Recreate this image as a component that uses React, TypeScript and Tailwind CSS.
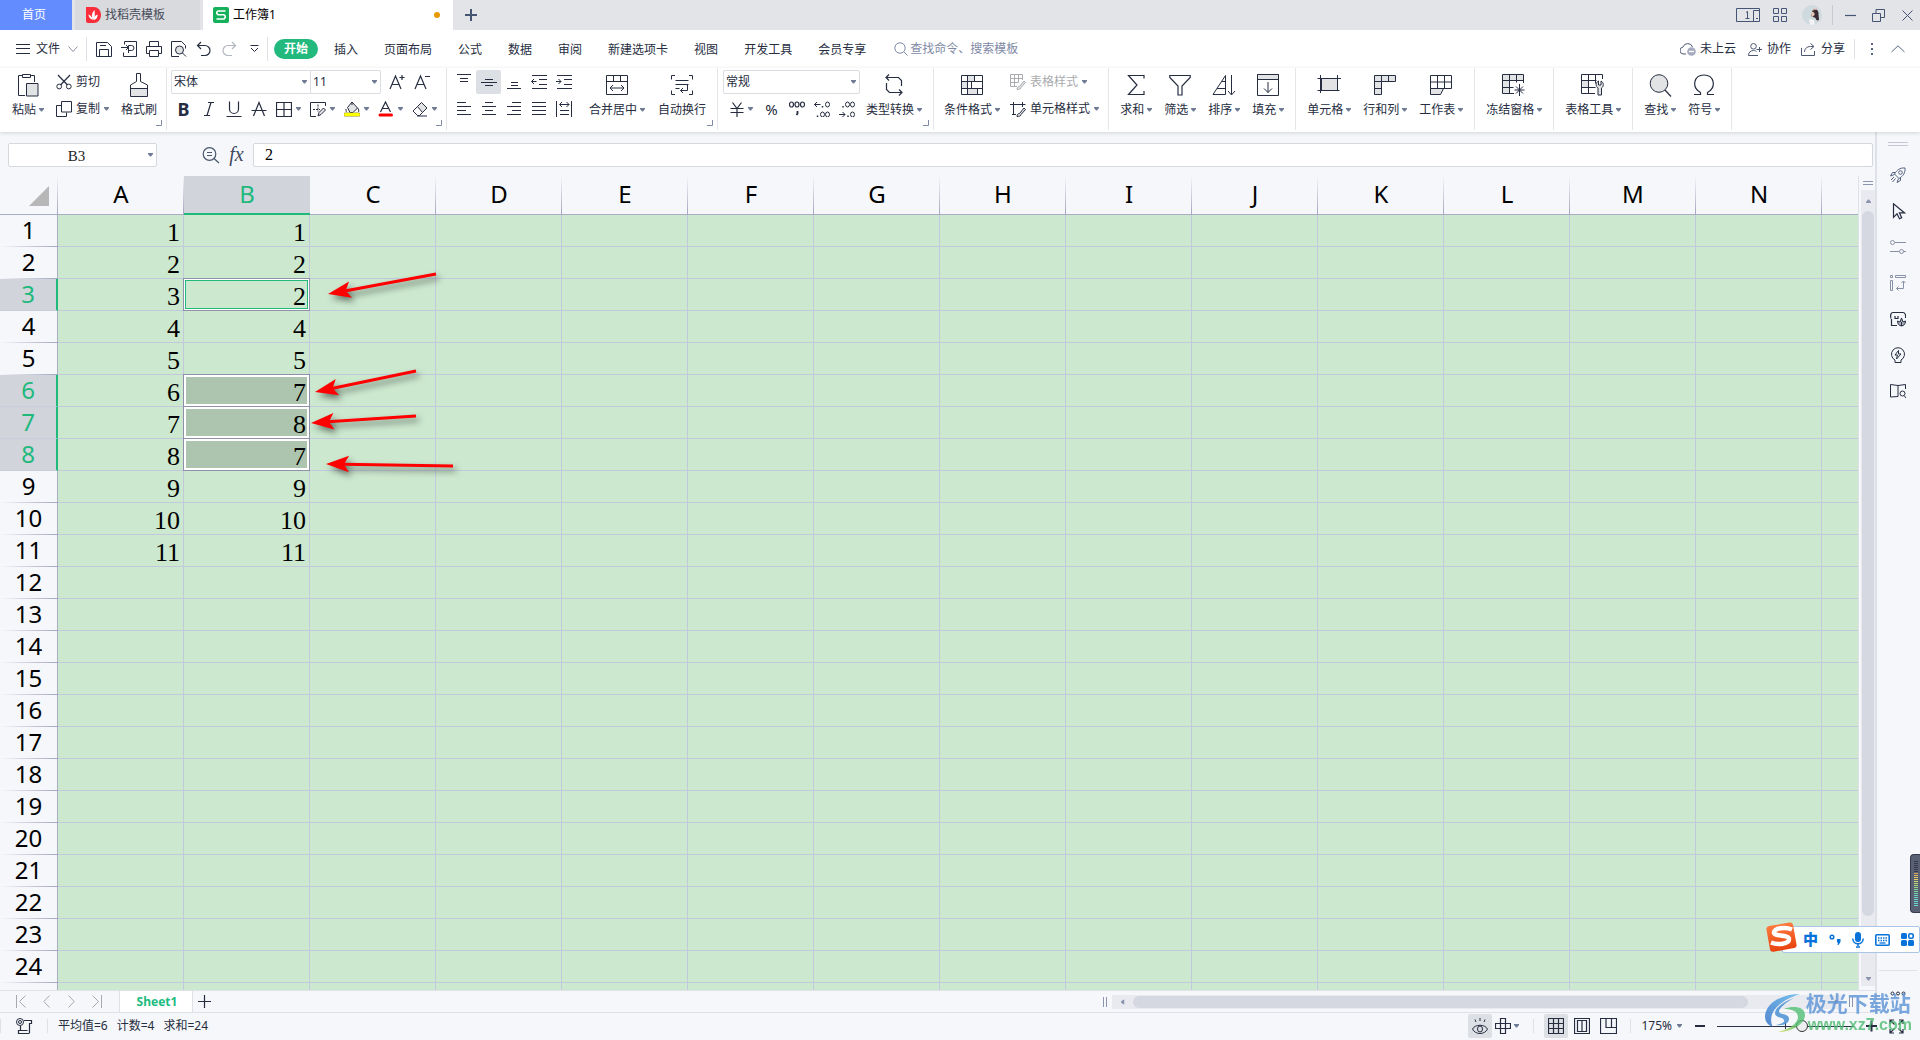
import React from "react";

type IconProps = { w?: number; h?: number; className?: string; children: React.ReactNode };

function Icon({ w = 16, h = 16, className = "", children }: IconProps) {
  return (
    <svg
      width={w}
      height={h}
      viewBox={`0 0 ${w} ${h}`}
      fill="none"
      stroke="currentColor"
      strokeWidth="1"
      className={`shrink-0 ${className}`}
      aria-hidden="true"
    >
      {children}
    </svg>
  );
}

const Stroke = ({ d, w, h, className, sw }: { d: string; w?: number; h?: number; className?: string; sw?: number }) => (
  <Icon w={w} h={h} className={className}>
    <path d={d} strokeWidth={sw ?? 1.2} />
  </Icon>
);

function Caret({ className = "text-[#6f7a94]" }: { className?: string }) {
  return (
    <svg width="5" height="4" viewBox="0 0 5 4" className={`shrink-0 ${className}`} aria-hidden="true">
      <path d="M0 0h5v1L3 3.500H2L0 1z" fill="currentColor" />
    </svg>
  );
}

function Corner() {
  return (
    <svg width="6" height="6" viewBox="0 0 6 6" className="absolute right-1 bottom-1 text-[#7f8aa6]" aria-hidden="true">
      <path d="M5.500 0v5.500H0" fill="none" stroke="currentColor" />
    </svg>
  );
}

/* ---------- ribbon icons ---------- */
const G = "#e2e3e5";

const PasteIcon = () => (
  <Icon w={22} h={24}>
    <path d="M8 22.500H1.500v-20H6M13 2.500h4.500V9M5.500 1.500h8v3h-8z" />
    <path d="M9.500 10.500h11.500v12.500H9.500z" fill={G} />
  </Icon>
);
const CutIcon = () => (
  <Icon>
    <path d="M2 1l9.500 10M14 1L4.500 11" strokeWidth="1.2" />
    <circle cx="3.2" cy="12.5" r="2.4" />
    <circle cx="12.8" cy="12.5" r="2.4" />
  </Icon>
);
const CopyIcon = () => (
  <Icon>
    <path d="M5.500 0.500h10v10.500h-10zM5 4.500H0.500v11H10.500v-4" />
  </Icon>
);
const BrushIcon = () => (
  <Icon w={20} h={24}>
    <path d="M1.500 15.500h17v8h-17z" fill={G} stroke="none" />
    <path d="M7.500 8.500v-8h4v8l7 3.500v11.500h-17V12zM1.500 15.500h17" />
  </Icon>
);
const FontUp = ({ up }: { up: boolean }) => (
  <Icon w={17} h={16}>
    <path d={up ? "M1 15L6.500 2L12 15M3 10.500h7M10.500 3.500h5M13 1v5" : "M1 15L6.500 2L12 15M3 10.500h7M11 2.500h5"} strokeWidth="1.2" />
  </Icon>
);
const BorderIcon = () => <Stroke d="M0.500 1.500h15v14h-15zM8 1.500v14M0.500 8.500h15" />;
const DrawBorderIcon = () => (
  <Icon>
    <path d="M6 15.500H0.500v-14h15V5" />
    <path d="M3 8.500h7M8 3.500v7" strokeDasharray="2 1" />
    <path d="M8 15l1-3.500 4.500-4.500 2 2L11 13.500z" fill={G} />
  </Icon>
);
const FillIcon = () => (
  <Icon>
    <path d="M3.500 6.500L8 1l5.500 6-4.500 4.500H6z" fill={G} />
    <path d="M2 8c0 2 .5 3 0 3M13.500 7c1.500 1 1.500 3 1 4M8 1v3" />
    <path d="M1.500 13.500h13" stroke="#8a8a40" strokeWidth="4" strokeLinecap="round" />
    <path d="M1.500 13.500h13" stroke="#ffff00" strokeWidth="3" strokeLinecap="round" />
  </Icon>
);
const FontColorIcon = () => (
  <Icon>
    <path d="M2.500 11L7.500 1l5 10M4.500 7.500h6" strokeWidth="1.2" />
    <path d="M2 14h11.500" stroke="#ff0000" strokeWidth="3" strokeLinecap="round" />
  </Icon>
);
const EraserIcon = () => (
  <Icon>
    <path d="M5.500 5.500L9.500 1.500l5.500 5.500-4.500 4.500z" fill={G} />
    <path d="M5.500 5.500L1 10l4.500 4.500h2l3-3M5 15h10" />
  </Icon>
);
const MergeIcon = () => (
  <Icon w={22} h={22}>
    <path d="M0.500 1.500h21v19h-21zM0.500 7.500h21M7.500 1.500v6M14.500 1.500v6M4 14h14M7 11l-3 3 3 3M15 11l3 3-3 3" />
  </Icon>
);
const WrapIcon = () => (
  <Icon w={22} h={22}>
    <path d="M4 1.500H.5v4M18 1.500h3.500v4M4 20.500H.5v-4M18 20.500h3.500v-4M4.500 6.500h13M4.500 10.500h13M4.500 14.500h4M16.500 10.500v6h-7M12 14l-2.500 2.500L12 19" />
  </Icon>
);
const ConvertIcon = () => (
  <Icon w={20} h={22}>
    <path d="M5 .5l-3 3 3 3M2 3.500h12.500l3 3V12M15 21.500l3-3-3-3M18 18.500H5.500l-3-3V9" strokeWidth="1.2" />
  </Icon>
);
const CondIcon = () => (
  <Icon w={22} h={22}>
    <path d="M6.500 1.500h7v6h-7zM6.500 14.500h10v6h-10zM.5 7.500h6v7h-6z" fill={G} stroke="none" />
    <path d="M.5 1.500h21v19H.5zM.5 7.500h21M.5 14.500h21M6.500 1.500v19M13.500 1.500v6M10.500 7.500v7M16.500 14.500v6" />
  </Icon>
);
const TableStyleIcon = () => (
  <Icon>
    <path d="M7 12.500H.5v-12h12V6M.5 4.500h12M.5 8.500h8M4.500 .5v12M8.500 .5v8" />
    <path d="M7 15.500c0-2 1-3 2.500-3L14 7l1.500 1.500-4.500 5c0 1.500-2 2-4 2z" fill={G} />
  </Icon>
);
const CellStyleIcon = () => (
  <Icon>
    <path d="M0 3.500h15.500M3.500 1v13M12.500 1v5M2 13.500h4" />
    <path d="M7 15.500c0-2 1-3 2.500-3L14 7l1.500 1.500-4.500 5c0 1.500-2 2-4 2z" fill={G} />
  </Icon>
);
const SumIcon = () => <Stroke w={18} h={22} d="M17 4.500V1.500H1.500L10 11L1.500 20.500H17V17" />;
const FilterIcon = () => <Stroke w={22} h={22} d="M.8 1.500h20.400v2L13 12v9H9v-9L.8 3.500z" />;
const SortIcon = () => (
  <Icon w={24} h={22}>
    <path d="M13.500 1.500v19H1zM13.500 7.500H9.500M13.500 14.500H5M19.500 1v19.500M16 17l3.500 4 3.500-4" />
  </Icon>
);
const FillDownIcon = () => (
  <Icon w={22} h={22}>
    <path d="M.5 .5h21v5H.5z" fill={G} />
    <path d="M.5 .5h21v21H.5zM11 8v10.500M7 14.500l4 4 4-4" />
  </Icon>
);
const CellIcon = () => (
  <Icon w={24} h={22}>
    <path d="M4.500 4.500h16v12h-16z" fill={G} />
    <path d="M.5 4.500h23.500M3.500 1v18M20.500 1v13M.5 16.500h17M19.500 16.500h3" />
  </Icon>
);
const RowColIcon = () => (
  <Icon w={22} h={22}>
    <path d="M.5 1.500h21v6H7.500v13h-7z" fill={G} stroke="none" />
    <path d="M.5 1.500h21v6H7.500v13h-7zM.5 7.500h7v-6M14.500 1.500v6M.5 14.500h7" />
  </Icon>
);
const SheetIcon = () => (
  <Icon w={22} h={22}>
    <path d="M.5 14.500h13l-3 6H.5z" fill={G} />
    <path d="M.5 1.500h21v13H.5zM.5 8h21M7.500 1.500v13M14.500 1.500v13" />
  </Icon>
);
const FreezeIcon = () => (
  <Icon w={24} h={22}>
    <path d="M.5 .5h21v6H7.500v13h-7z" fill={G} stroke="none" />
    <path d="M12 19.500H.5V.5h21V9M.5 6.500h21M.5 13.500h11M7.500 .5v19M14.500 .5v8M17.500 10v12M12.500 16h10M14 12.500l7 7M21 12.500l-7 7" />
  </Icon>
);
const ToolIcon = () => (
  <Icon w={24} h={22}>
    <path d="M.5 7h7v6H.5z" fill={G} stroke="none" />
    <path d="M14 19.500H.5V.5h21V5M.5 6.500h15M.5 13.500h14M7.500 .5v19M14.500 .5v9" />
    <path d="M17.500 7c-3 1.500-3 5.500-.5 7v7h3.500v-7c2.500-1.500 2.500-5.500-.5-7v4h-2.500z" fill={G} />
  </Icon>
);
const FindIcon = () => (
  <Icon w={23} h={23}>
    <circle cx="10" cy="9.500" r="8.800" fill={G} />
    <path d="M16 16l6 6.500" strokeWidth="1.2" />
  </Icon>
);
const OmegaIcon = () => (
  <Stroke w={22} h={22} d="M1 20.500h6.500v-2C-2 13 1 1 11 1s13 12 3.500 17.500v2H21" />
);

/* ---------- small building blocks ---------- */
function Big({ icon, label, caret = true }: { icon: React.ReactNode; label: string; caret?: boolean }) {
  return (
    <button type="button" className="flex shrink-0 flex-col items-center">
      <span className="flex h-[30px] items-center justify-center pt-1">{icon}</span>
      <span className="flex h-6 items-center gap-[3px] whitespace-nowrap">
        {label}
        {caret && <Caret />}
      </span>
    </button>
  );
}

function Small({ icon, label, caret = true, className = "" }: { icon: React.ReactNode; label: string; caret?: boolean; className?: string }) {
  return (
    <button type="button" className={`flex h-[27px] items-center gap-1 whitespace-nowrap ${className}`}>
      {icon}
      {label}
      {caret && <Caret />}
    </button>
  );
}

function Group({ children, corner, className = "gap-3 px-[11px]" }: { children: React.ReactNode; corner?: boolean; className?: string }) {
  return (
    <div className={`relative flex h-[62px] shrink-0 border-r border-[#e4e6ea] ${className}`}>
      {children}
      {corner && <Corner />}
    </div>
  );
}

function Cell({ children, label, className = "w-[25px]" }: { children: React.ReactNode; label: string; className?: string }) {
  return (
    <button type="button" aria-label={label} className={`flex h-6 shrink-0 items-center justify-center gap-1 ${className}`}>
      {children}
    </button>
  );
}

function Combo({ label, options, className }: { label: string; options: string[]; className: string }) {
  return (
    <div className={`relative flex h-6 items-center border border-[#d9dce1] bg-white ${className}`}>
      <select aria-label={label} className="h-full w-full appearance-none bg-transparent pl-[2px] outline-none">
        {options.map((o) => (
          <option key={o}>{o}</option>
        ))}
      </select>
      <Caret className="pointer-events-none absolute right-[3px] text-[#6f7a94]" />
    </div>
  );
}

const lines = (rows: number[][]) => rows.map(([a, b, y]) => `M${a} ${y}.5H${b}`).join("");
const L = ({ rows, extra = "" }: { rows: number[][]; extra?: string }) => <Stroke sw={1} d={lines(rows) + extra} />;

const menu = ["插入", "页面布局", "公式", "数据", "审阅", "新建选项卡", "视图", "开发工具", "会员专享"];

function TitleBar() {
  return (
    <header className="flex h-[30px] shrink-0 bg-[#e2e4e8]">
      <button type="button" className="w-[72px] bg-[#638dff] pr-1 text-white">首页</button>
      <button type="button" className="ml-[3px] flex w-[125px] items-center gap-1 bg-[#d9dade] pl-[11px] text-[#464b59]">
        <svg width="15" height="16" viewBox="0 0 15 16" aria-hidden="true">
          <path d="M0 0h8a7 8 0 010 16H2a2 2 0 01-2-2z" fill="#fb2d3a" />
          <path d="M7.500 13C5 10 5.500 6 8.500 3c.5 4 .5 7-1 10zM7 13C4 12 2.500 10 2.500 7.500 4.500 8.500 6 10 7 13zM8 13c0-3 1-4.500 3.500-5.500C12 10 10.500 12.500 8 13z" fill="#fff" />
        </svg>
        找稻壳模板
      </button>
      <div className="ml-[3px] flex w-[250px] items-center bg-white pr-[13px] pl-[10px] text-black">
        <svg width="16" height="16" viewBox="0 0 16 16" aria-hidden="true">
          <rect width="16" height="16" rx="2" fill="#14b05a" />
          <path d="M12.500 4H5L3.800 5.200v1.300L5 7.800h6l1.200 1.200v1.500L11 12H3.500" fill="none" stroke="#fff" strokeWidth="1.600" />
        </svg>
        <span className="ml-1 flex-1">工作簿1</span>
        <span className="size-[6px] rounded-full bg-[#e69a00]" />
      </div>
      <button type="button" aria-label="新建标签" className="ml-3 text-[#475575]">
        <Stroke w={12} h={12} sw={2} d="M6 0v12M0 6h12" />
      </button>
      <div className="ml-auto flex items-center pr-[7px] text-[#475575]">
        <button type="button" aria-label="窗口" className="mr-[13px]">
          <Icon w={24} h={15}>
            <path d="M.5 .5h23v13H.5zM17.500 13.500v-11h6M20 10.500h2M10 4.500l1.500-1v7.500M9.500 10.500h4" />
          </Icon>
        </button>
        <button type="button" aria-label="应用" className="mr-[15px]">
          <Stroke w={14} h={14} sw={1} d="M.5 .5h5v5h-5zM8.500 .5h5v5h-5zM.5 8.500h5v5h-5zM8.500 8.500h5v5h-5z" />
        </button>
        <button type="button" aria-label="账户" className="mr-[10px] size-5 overflow-hidden rounded-full bg-[#cfdadf]">
          <svg width="20" height="20" viewBox="0 0 20 20" aria-hidden="true">
            <path d="M11 5c3-2 6 1 5.500 4l.5 6c-2 1-3 0-3.500-2L9 11c1-3 1-5 2-6z" fill="#3a2a33" />
            <path d="M10 7c2-.5 3 1 2.500 3L10 12c-1-2-1-3 0-5z" fill="#eac9b8" />
            <path d="M7 14l5 1 1 5H8z" fill="#f3f3f5" />
            <path d="M11 5l4-1" stroke="#d8a38c" />
          </svg>
        </button>
        <span className="h-5 w-px bg-[#c5c9d0]" />
        <button type="button" aria-label="最小化" className="ml-3"><Stroke w={11} h={12} d="M0 6.500h11" /></button>
        <button type="button" aria-label="还原" className="ml-4">
          <Stroke w={13} h={13} sw={1} d="M.5 4.500h8v8h-8zM4 4.500v-4h8.500v8H9" />
        </button>
        <button type="button" aria-label="关闭" className="ml-4 pl-px"><Stroke w={11} h={11} sw={1} d="M.5 .5l10 10M10.500 .5l-10 10" /></button>
      </div>
    </header>
  );
}

function MenuBar() {
  return (
    <nav className="flex h-[38px] shrink-0 items-center bg-white">
      <button type="button" className="ml-4 flex items-center">
        <Stroke w={14} h={12} sw={1} d="M0 1.500h14M0 5.500h14M0 10.500h14" />
        <span className="ml-[6px]">文件</span>
        <Stroke w={10} h={7} sw={1} className="ml-2 text-[#8b93a5]" d="M.5 .5l4.500 5 4.500-5" />
      </button>
      <span className="ml-2 h-6 w-px bg-[#dfe1e6]" />
      <div className="ml-[9px] flex items-center gap-[9px]">
        <button type="button" aria-label="保存"><Stroke sw={1} d="M.5 1.500h11l4 4v10H.5zM3.500 15.500v-7h9v7M4 4.500h6" /></button>
        <button type="button" aria-label="输出PDF"><Stroke sw={1} d="M3.500 3.500v-3h12v15H2.500v-4M0 6.500h7M5 4l2.500 2.500L5 9M7.500 12V4.500h3a2.500 2.500 0 010 5h-3" /></button>
        <button type="button" aria-label="打印"><Stroke sw={1} d="M3.500 5.500v-5h9v5M3.500 12.500h-3v-7h15v7h-3M3.500 9.500h9v6h-9z" /></button>
        <button type="button" aria-label="打印预览">
          <Icon>
            <path d="M8 15.500H.5V.5h10l4 4v3" />
            <circle cx="8.500" cy="9" r="4" fill={G} />
            <path d="M11.500 12l3.500 3.500" />
          </Icon>
        </button>
        <button type="button" aria-label="撤销"><Stroke d="M5 1L1.500 4.500 5 8M1.500 4.500h7.500a5 5 0 010 10H5" /></button>
        <button type="button" aria-label="恢复" className="text-[#b3b7bf]"><Stroke d="M11 1l3.500 3.500L11 8M14.500 4.500H7a5 5 0 000 10h4" /></button>
        <button type="button" aria-label="更多" className="ml-1"><Stroke w={9} h={8} sw={1} d="M.5 .5h8M1 3l3.500 3.500L8 3" /></button>
      </div>
      <span className="ml-[8px] h-6 w-px bg-[#dfe1e6]" />
      <button type="button" className="ml-[6px] h-5 w-11 rounded-full bg-[#22b97e] text-[12px] leading-5 font-bold text-white">开始</button>
      <div className="ml-4 flex gap-[26px] pt-px">
        {menu.map((m) => (
          <button type="button" key={m} className="whitespace-nowrap">{m}</button>
        ))}
      </div>
      <label className="ml-[28px] flex items-center text-[#7e89a5]">
        <Icon w={14} h={14}>
          <circle cx="6" cy="6" r="5.200" />
          <path d="M10 10l3.500 3.500" />
        </Icon>
        <input aria-label="查找命令" placeholder="查找命令、搜索模板" className="ml-[2px] w-40 bg-transparent outline-none placeholder:text-[#7e89a5]" />
      </label>
      <div className="ml-auto flex items-center pr-[15px]">
        <button type="button" className="flex items-center gap-1">
          <svg width="16" height="14" viewBox="0 0 16 14" fill="none" aria-hidden="true">
            <path d="M6 12H4A3.500 3.500 0 013 5a5 5 0 019.500 0" stroke="#4e5873" />
            <circle cx="11.500" cy="9.500" r="4.300" fill="#a5acbf" />
            <path d="M9 9.500h5" stroke="#fff" strokeWidth="1.300" />
          </svg>
          未上云
        </button>
        <button type="button" className="ml-3 flex items-center gap-[5px]">
          <Stroke w={14} h={13} sw={1} className="text-[#4e5873]" d="M5.500 .5a2.800 2.800 0 010 5.600 2.800 2.800 0 010-5.600zM10 12.500H.5c0-3 2-5 5-5 1.500 0 2.500.5 3 1M8.500 6.500h5.500M11.500 4v5" />
          协作
        </button>
        <button type="button" className="ml-[10px] flex items-center gap-[5px]">
          <Stroke w={15} h={13} sw={1} className="text-[#4e5873]" d="M.5 5v7.500h13V8M3.500 9c0-3 2-5.500 6-5.500h3M9.500 .5l3.500 3-3.500 3" />
          分享
        </button>
        <span className="ml-[9px] h-5 w-px bg-[#dfe1e6]" />
        <button type="button" aria-label="更多选项" className="ml-4">
          <svg width="3" height="12" viewBox="0 0 3 12" fill="#596580" aria-hidden="true"><path d="M0 0h2v2H0zM0 5h2v2H0zM0 10h2v2H0z" /></svg>
        </button>
        <button type="button" aria-label="收起功能区" className="ml-[17px]"><Stroke w={14} h={8} sw={1} className="text-[#596580]" d="M.5 7L7 .8 13.500 7" /></button>
      </div>
    </nav>
  );
}

function Ribbon() {
  return (
    <section className="relative z-10 flex h-16 shrink-0 bg-white shadow-[0_1px_4px_rgba(0,0,0,0.14)]">
      <Group corner className="gap-3 pr-[9px] pl-3">
        <Big icon={<PasteIcon />} label="粘贴" />
        <div>
          <Small icon={<CutIcon />} label="剪切" caret={false} />
          <Small icon={<CopyIcon />} label="复制" />
        </div>
        <Big icon={<BrushIcon />} label="格式刷" caret={false} />
      </Group>
      <Group corner className="flex-col pr-[5px] pl-1">
        <div className="flex h-[28px] items-center">
          <Combo label="字体" options={["宋体"]} className="w-[140px] rounded-l-xs" />
          <Combo label="字号" options={["11"]} className="-ml-px w-[71px] rounded-r-xs" />
          <button type="button" aria-label="增大字号" className="ml-2"><FontUp up /></button>
          <button type="button" aria-label="减小字号" className="ml-2"><FontUp up={false} /></button>
        </div>
        <div className="flex h-[26px] items-center">
          <Cell label="加粗"><span className="text-[18px] leading-none font-bold">B</span></Cell>
          <Cell label="倾斜"><Stroke w={12} h={16} d="M5 1.500h6M1 14.500h6M8 1.500L4 14.500" /></Cell>
          <Cell label="下划线"><Stroke d="M3.500 .5v7.500a4.500 4.500 0 009 0V.5M.5 15.500h15" /></Cell>
          <Cell label="删除线"><Stroke d="M2.500 15L8 1.500 13.500 15M.5 9.500h15" /></Cell>
          <Cell label="边框" className="w-[34px]"><BorderIcon /><Caret /></Cell>
          <Cell label="绘图边框" className="w-[34px]"><DrawBorderIcon /><Caret /></Cell>
          <Cell label="填充颜色" className="w-[34px]"><FillIcon /><Caret /></Cell>
          <Cell label="字体颜色" className="w-[34px]"><FontColorIcon /><Caret /></Cell>
          <Cell label="清除" className="w-[34px]"><EraserIcon /><Caret /></Cell>
        </div>
      </Group>
      <Group corner className="pr-[11px] pl-1">
        <div>
          <div className="flex h-[28px] items-center">
            <Cell label="顶端对齐"><L rows={[[1, 15, 0], [4, 12, 4], [4, 12, 7]]} /></Cell>
            <Cell label="垂直居中" className="w-[25px] rounded-xs bg-[#dce0e5]"><L rows={[[4, 12, 5], [0, 16, 8], [4, 12, 11]]} /></Cell>
            <Cell label="底端对齐"><L rows={[[5, 12, 8], [5, 12, 11], [1, 15, 14]]} /></Cell>
            <Cell label="减少缩进"><L rows={[[1, 16, 1], [8, 16, 5], [8, 16, 10], [1, 16, 14]]} extra="M0.500 7.500h5M3 5L.5 7.500 3 10" /></Cell>
            <Cell label="增加缩进"><L rows={[[1, 16, 1], [8, 16, 5], [8, 16, 10], [1, 16, 14]]} extra="M0 7.500h5M2.500 5L5 7.500 2.500 10" /></Cell>
          </div>
          <div className="flex h-[26px] items-center">
            <Cell label="左对齐"><L rows={[[1, 10, 1], [1, 15, 5], [1, 10, 9], [1, 15, 13]]} /></Cell>
            <Cell label="水平居中"><L rows={[[4, 12, 1], [1, 15, 5], [4, 12, 9], [1, 15, 13]]} /></Cell>
            <Cell label="右对齐"><L rows={[[6, 15, 1], [1, 15, 5], [6, 15, 9], [1, 15, 13]]} /></Cell>
            <Cell label="两端对齐"><L rows={[[1, 15, 1], [1, 15, 5], [1, 15, 9], [1, 15, 13]]} /></Cell>
            <Cell label="分散对齐"><L rows={[[4, 13, 3], [4, 13, 9], [4, 13, 13]]} extra="M.5 0v16M15.500 0v16M6 1L3.500 3.500 6 6M10.500 1L13 3.500 10.500 6" /></Cell>
          </div>
        </div>
        <span className="w-[13px]" />
        <Big icon={<MergeIcon />} label="合并居中" />
        <span className="w-[13px]" />
        <Big icon={<WrapIcon />} label="自动换行" caret={false} />
      </Group>
      <Group corner className="pr-[11px] pl-[5px]">
        <div>
          <div className="flex h-[28px] items-center">
            <Combo label="数字格式" options={["常规"]} className="w-[137px] rounded-xs" />
          </div>
          <div className="flex h-[26px] items-center">
            <Cell label="货币" className="w-[36px]"><Stroke w={14} h={15} d="M2.500 .5L7 6.500 11.500 .5M7 6.500V15M0.500 6.500h13M.5 10.500h13" /><Caret /></Cell>
            <Cell label="百分比"><span className="text-[15px] leading-none">%</span></Cell>
            <Cell label="千位分隔">
              <Icon w={16} h={16}>
                <path d="M2.500 1a2 2.500 0 010 5 2 2.500 0 010-5zM8 1a2 2.500 0 010 5 2 2.500 0 010-5zM13.500 1a2 2.500 0 010 5 2 2.500 0 010-5z" strokeWidth="1.2" />
                <path d="M8.500 10v2.500L7.500 14" strokeWidth="1.8" />
              </Icon>
            </Cell>
            <Cell label="增加小数位">
              <Icon w={16} h={16}>
                <path d="M0.500 3.500h6M3 1L.5 3.500 3 6M13.500 1a2 2.500 0 010 5 2 2.500 0 010-5zM8.500 11a2 2.500 0 010 5 2 2.500 0 010-5zM13.500 11a2 2.500 0 010 5 2 2.500 0 010-5z" />
                <path d="M8.500 5v1.500M3.500 14.500V16" strokeWidth="1.5" />
              </Icon>
            </Cell>
            <Cell label="减少小数位">
              <Icon w={16} h={16}>
                <path d="M0 13.500h6M3.500 11L6 13.500 3.500 16M13.500 11a2 2.500 0 010 5 2 2.500 0 010-5zM8.500 1a2 2.500 0 010 5 2 2.500 0 010-5zM13.500 1a2 2.500 0 010 5 2 2.500 0 010-5z" />
                <path d="M4 5v1.500M9 14.500V16" strokeWidth="1.5" />
              </Icon>
            </Cell>
          </div>
        </div>
        <span className="w-[6px]" />
        <Big icon={<ConvertIcon />} label="类型转换" />
      </Group>
      <Group className="gap-[10px] pr-[9px] pl-[10px]">
        <Big icon={<CondIcon />} label="条件格式" />
        <div>
          <Small icon={<TableStyleIcon />} label="表格样式" className="text-[#a9abae]" />
          <Small icon={<CellStyleIcon />} label="单元格样式" />
        </div>
      </Group>
      <Group>
        <Big icon={<SumIcon />} label="求和" />
        <Big icon={<FilterIcon />} label="筛选" />
        <Big icon={<SortIcon />} label="排序" />
        <Big icon={<FillDownIcon />} label="填充" />
      </Group>
      <Group>
        <Big icon={<CellIcon />} label="单元格" />
        <Big icon={<RowColIcon />} label="行和列" />
        <Big icon={<SheetIcon />} label="工作表" />
      </Group>
      <Group><Big icon={<FreezeIcon />} label="冻结窗格" /></Group>
      <Group><Big icon={<ToolIcon />} label="表格工具" /></Group>
      <Group>
        <Big icon={<FindIcon />} label="查找" />
        <Big icon={<OmegaIcon />} label="符号" />
      </Group>
    </section>
  );
}

function FormulaBar() {
  return (
    <div className="flex h-11 shrink-0 items-center pt-[2px] pr-[2px] pl-2">
      <div className="relative flex h-6 w-[149px] items-center rounded-xs border border-[#d5d8dd] bg-white">
        <input aria-label="名称框" defaultValue="B3" className="w-full bg-transparent pt-px pr-3 text-center font-['Liberation_Serif',serif] text-[15px] text-[#222] outline-none" />
        <Caret className="absolute right-[3px] text-[#6f7a94]" />
      </div>
      <button type="button" aria-label="浏览公式结果" className="ml-[45px] text-[#4b566f]">
        <Icon w={18} h={17}>
          <circle cx="7.500" cy="7" r="6.300" strokeWidth="1.200" />
          <path d="M5 5.500h5M5 8.500h5M12 11.500l5 4.500" strokeWidth="1.200" />
        </Icon>
      </button>
      <button type="button" aria-label="插入函数" className="w-[33px] pb-[3px] text-center font-['Liberation_Serif',serif] text-[20px] leading-none text-[#3f4960] italic">fx</button>
      <input aria-label="编辑栏" defaultValue="2" className="h-6 min-w-0 flex-1 rounded-xs border border-[#d5d8dd] bg-white pb-px pl-[11px] font-['Liberation_Serif',serif] text-[16px] text-black outline-none" />
    </div>
  );
}

const columns = "ABCDEFGHIJKLMN".split("");
const colA = [1, 2, 3, 4, 5, 6, 7, 8, 9, 10, 11];
const colB = [1, 2, 2, 4, 5, 7, 8, 7, 9, 10, 11];
const selected = [3, 6, 7, 8];

function SheetGrid() {
  return (
    <div className="relative min-w-0 flex-1 overflow-hidden bg-[#cce8cf]">
      <table className="w-full table-fixed border-separate border-spacing-0">
        <colgroup>
          <col className="w-[58px]" />
          {columns.map((c) => <col key={c} className="w-[126px]" />)}
          <col />
        </colgroup>
        <thead>
          <tr className="h-[39px] bg-[#f5f7fa] text-[24px] leading-9 text-black">
            <th aria-label="全选" className="border-b border-[#a9adc4] bg-[linear-gradient(to_bottom,transparent,#a3a7c0)] bg-[length:1px_100%] bg-right bg-no-repeat p-0">
              <svg width="20" height="20" viewBox="0 0 20 20" className="mt-px mr-[9px] ml-auto" aria-hidden="true"><path d="M20 0v20H0z" fill="#b7b7b7" /></svg>
            </th>
            {columns.map((c) =>
              c === "B" ? (
                <th key={c} className="border-b-2 border-[#1fb97c] bg-[#d2d4dc] p-0 align-top font-normal text-[#1fb97c]">{c}</th>
              ) : (
                <th key={c} className="border-b border-[#a9adc4] bg-[linear-gradient(to_bottom,transparent,#a3a7c0)] bg-[length:1px_100%] bg-right bg-no-repeat p-0 align-top font-normal">{c}</th>
              ),
            )}
            <th className="border-b border-[#a9adc4] p-0" />
          </tr>
        </thead>
        <tbody>
          {Array.from({ length: 25 }, (_, i) => {
            const n = i + 1;
            const sel = selected.includes(n);
            return (
              <tr key={n} className="h-8 leading-[29px]">
                <th
                  scope="row"
                  className={
                    sel
                      ? "border-r-2 border-b border-r-[#1fb97c] border-b-[#c9cdd9] bg-[#d2d4dc] p-0 align-top text-[24px] font-normal text-[#1fb97c]"
                      : "border-r border-r-[#a9adc4] bg-[#f5f7fa] bg-[linear-gradient(to_right,transparent,#a3a7c0)] bg-[length:100%_1px] bg-bottom bg-no-repeat p-0 align-top text-[24px] font-normal text-black"
                  }
                >
                  {n < 25 ? n : null}
                </th>
                {columns.map((c) => {
                  const v = c === "A" ? colA[i] : c === "B" ? colB[i] : undefined;
                  const mark = c === "B" && sel;
                  return (
                    <td key={c} className="border-r border-b border-[#c3c9dc] p-0 text-right font-['Liberation_Serif',serif] text-[26px] text-black">
                      {mark && n === 3 ? (
                        <div className="h-[31px] border border-white outline outline-[#8f91ab]">
                          <div className="h-[29px] border border-[#1fb97c] pr-px leading-[31px]">{v}</div>
                        </div>
                      ) : mark ? (
                        <div className="h-[31px] border-2 border-white bg-[#adc5ae] pr-px leading-[31px] outline outline-[#8f91ab]">{v}</div>
                      ) : (
                        <div className="h-[31px] pr-[3px] leading-[35px]">{v}</div>
                      )}
                    </td>
                  );
                })}
                <td className="border-b border-[#c3c9dc] p-0" />
              </tr>
            );
          })}
        </tbody>
      </table>
      <svg width="200" height="220" viewBox="300 260 200 220" className="pointer-events-none absolute top-[84px] left-[300px] drop-shadow-[3px_4px_3px_rgba(0,0,0,0.5)]" aria-hidden="true">
        <g stroke="#ff0000" strokeWidth="3" fill="#ff0000" strokeLinecap="butt">
          {[
            [436, 274, 328, 294],
            [416, 371, 315, 392],
            [416, 416, 311, 423],
            [453, 466, 326, 464],
          ].map(([x1, y1, x2, y2]) => {
            const a = (Math.atan2(y1 - y2, x1 - x2) * 180) / Math.PI;
            const len = Math.hypot(x1 - x2, y1 - y2);
            return (
              <g key={x1 + y1} transform={`translate(${x2} ${y2}) rotate(${a})`}>
                <path d={`M17 0H${len}`} />
                <path d="M0 0L23-8.500L18 0L23 8z" stroke="none" />
              </g>
            );
          })}
        </g>
      </svg>
    </div>
  );
}

function VScroll() {
  return (
    <div className="flex w-[17px] shrink-0 flex-col border-l border-[#dfe1e7] pl-[2px]">
      <div className="flex h-[14px] items-center justify-center text-[#8b95ae]"><Stroke w={10} h={4} sw={1} d="M0 .5h10M0 3.500h10" /></div>
      <div className="mb-1 flex flex-1 flex-col items-center bg-[#e8eaef]">
        <button type="button" aria-label="向上滚动" className="flex h-[21px] items-center"><Caret className="rotate-180 text-[#8b95b0]" /></button>
        <div className="w-3 flex-1 rounded-full bg-[#d5d8e0]" />
        <button type="button" aria-label="向下滚动" className="mt-[55px] flex h-[15px] items-center"><Caret className="text-[#8b95b0]" /></button>
      </div>
    </div>
  );
}

function SheetBar() {
  return (
    <div className="flex h-[23px] shrink-0 items-center border-t border-b border-[#dfe1e7]">
      <div className="flex w-[119px] items-center justify-between pr-[17px] pl-4 text-[#a6a9b0]">
        <button type="button" aria-label="第一个"><Stroke w={10} h={13} d="M.5 0v13M9.500 .5L3.500 6.500l6 6" sw={1} /></button>
        <button type="button" aria-label="上一个"><Stroke w={7} h={13} d="M6.500 .5L.8 6.500l5.700 6" sw={1} /></button>
        <button type="button" aria-label="下一个"><Stroke w={7} h={13} d="M.5 .5l5.700 6-5.700 6" sw={1} /></button>
        <button type="button" aria-label="最后一个"><Stroke w={10} h={13} d="M9.500 0v13M.5 .5l6 6-6 6" sw={1} /></button>
      </div>
      <button type="button" className="h-[21px] w-[74px] border-x border-[#dfe1e7] bg-white pl-[2px] text-[12px] font-bold text-[#22bb80]">Sheet1</button>
      <button type="button" aria-label="新建工作表" className="ml-[5px]"><Stroke w={13} h={13} d="M6.500 0v13M0 6.500h13" /></button>
      <div className="ml-auto flex w-[772px] items-center">
        <span className="h-[10px] w-1 border-x border-[#8b95ae]" />
        <div className="ml-[5px] flex h-[14px] w-[730px] items-center bg-[#e8eaef]">
          <button type="button" aria-label="向左滚动" className="flex w-[21px] justify-center"><Caret className="rotate-90 text-[#8b95b0]" /></button>
          <div className="h-3 flex-1 rounded-full bg-[#d5d8e0]" />
          <button type="button" aria-label="向右滚动" className="ml-[82px] flex w-[12px] justify-center"><Caret className="-rotate-90 text-[#8b95b0]" /></button>
        </div>
        <span className="ml-[7px] h-[10px] w-1 border-x border-[#8b95ae]" />
      </div>
    </div>
  );
}

function SideBar() {
  const item = "flex h-9 items-center justify-center";
  return (
    <aside className="flex w-[45px] shrink-0 flex-col border-l-2 border-[#dfe1e8] pt-[10px] pr-px">
      <Stroke w={20} h={4} sw={1} className="mx-auto mb-[11px] text-[#c3c7cf]" d="M0 .5h20M0 3.500h20" />
      <button type="button" aria-label="快捷" className={`${item} text-[#566282]`}>
        <Icon>
          <path d="M15 1C10 .5 7 3 4.500 7L9 11.500C13 9 15.500 6 15 1zM5.500 5.500L2.500 5.500.5 9l4-1.500M10.500 10.500v3L7 15.500 8.500 11.500M4 10l-3 3M5.500 11.500l-3 3.500" />
          <circle cx="10.500" cy="5.500" r="1.800" />
        </Icon>
      </button>
      <button type="button" aria-label="选择" className={item}><Stroke w={14} h={17} className="ml-[2px]" d="M1.500 .8v13.500l3.500-3.500 2.500 5 2.200-1-2.300-5h5z" /></button>
      <button type="button" aria-label="属性" className={`${item} text-[#8891a5]`}><Stroke sw={1} d="M5 3.500h11M2.500 1.500a2 2 0 010 4 2 2 0 010-4zM0 12.500h9M13.500 12.500H16M11.500 10.500a2 2 0 010 4 2 2 0 010-4z" /></button>
      <button type="button" aria-label="分析" className={`${item} text-[#8891a5]`}><Stroke sw={1} d="M.5 .5h2v2h-2zM5.500 .5h10v2h-10zM.5 5.500h2v10h-2zM13.500 6v7.500H6.500M11.500 8l2-2 2 2M8.500 11.500l-2 2 2 2" /></button>
      <button type="button" aria-label="素材" className={item}>
        <Icon>
          <path d="M1.500 8v6.500H7M1 7.500C0 4 1 1.500 3 1.500h10c2 0 3 2.500 2.500 5.500M5 5v2.500h3V5" strokeWidth="1.200" />
          <path d="M7.500 10c0 6.500 8 6.500 8 0l-2.500 1L11.500 7 10 11zM11.500 11v4" fill="#aeb3be" strokeWidth="1" />
        </Icon>
      </button>
      <button type="button" aria-label="智能" className={item}><Stroke sw={1} d="M5 13a6.500 6.500 0 116 0v2.500H5zM8.500 3.500l-3.500 4.500h2.500l-1 4 4.500-5H8.500z" /></button>
      <button type="button" aria-label="帮助" className={item}><Stroke sw={1} d="M8 13.500l-7.500 .5V1.500L8 2.500l7.500-1V6M8 2.500v11M12.500 8a2.500 2.500 0 010 5 2.500 2.500 0 010-5zM14.500 13l1.500 2" /></button>
      <span className="mx-[2px] mt-auto mb-5 h-px bg-[#dfe1e7]" />
      <button type="button" aria-label="更多" className="mb-[17px] flex justify-center">
        <Stroke w={16} h={5} sw={1} d="M2.500 1a1.500 1.500 0 010 3 1.500 1.500 0 010-3zM8 1a1.500 1.500 0 010 3A1.500 1.500 0 018 1zM13.500 1a1.500 1.500 0 010 3 1.500 1.500 0 010-3z" />
      </button>
    </aside>
  );
}

function StatusBar() {
  return (
    <footer className="flex h-[27px] shrink-0 items-center bg-[#f5f7fa] pb-px">
      <span className="h-[14px] w-px bg-[#dfe1e7]" />
      <button type="button" aria-label="宏" className="ml-[15px]">
        <Icon w={17} h={16}>
          <circle cx="4" cy="4" r="3.500" />
          <circle cx="4" cy="4" r="1.500" />
          <path d="M8 2.500h7.500v3h-2v9.500M4.500 8v4M13.500 15.500h-11v-3h9" strokeWidth="1.200" />
        </Icon>
      </button>
      <span className="ml-[14px] h-[14px] w-px bg-[#dfe1e7]" />
      <span className="ml-[10px]">平均值=6</span>
      <span className="ml-[9px]">计数=4</span>
      <span className="ml-[9px]">求和=24</span>
      <div className="ml-auto flex items-center pr-4">
        <button type="button" aria-label="护眼模式" className="flex h-6 w-6 items-center justify-center rounded-xs bg-[#dce0e5]">
          <Icon w={16} h={17}>
            <path d="M.5 11C3 6 13 6 15.500 11 13 17 3 17 .5 11zM8 0v3M3 1.500l1 2.500M13 1.500L12 4" />
            <ellipse cx="8" cy="11" rx="2.500" ry="3" />
          </Icon>
        </button>
        <button type="button" aria-label="阅读模式" className="ml-[3px] flex items-center gap-[3px]"><Stroke d="M5.500 .5h5v15h-5zM.5 5.500h15v5H.5z" /><Caret /></button>
        <span className="ml-[14px] h-[14px] w-px bg-[#dfe1e7]" />
        <button type="button" aria-label="普通视图" className="ml-[10px] flex h-6 w-6 items-center justify-center rounded-xs bg-[#dce0e5]"><Stroke d="M.5 .5h15v15H.5zM.5 5.500h15M.5 10.500h15M5.500 .5v15M10.500 .5v15" /></button>
        <button type="button" aria-label="页面布局视图" className="ml-[6px]"><Stroke w={16} h={16} d="M.5 .5h15v15H.5zM3.500 2.500h9v11h-9zM8 2.500v11" /></button>
        <button type="button" aria-label="分页预览" className="ml-[10px]"><Stroke w={17} h={16} d="M.5 .5h16v15H.5zM6 .5v9h5.500V.5M11.500 9.500h5" /></button>
        <span className="ml-[13px] h-[14px] w-px bg-[#dfe1e7]" />
        <button type="button" className="ml-[10px] flex items-center gap-[5px]">175%<Caret /></button>
        <button type="button" aria-label="缩小" className="ml-[13px]"><Stroke w={10} h={12} sw={2} d="M0 6h10" /></button>
        <div className="relative ml-3 flex h-4 w-[137px] items-center">
          <span className="absolute left-[68px] h-[6px] w-px bg-[#2d3449]" />
          <input
            type="range"
            aria-label="缩放"
            min={10}
            max={190}
            defaultValue={124}
            className="h-px w-full appearance-none bg-[#2d3449] [&::-webkit-slider-thumb]:size-3 [&::-webkit-slider-thumb]:appearance-none [&::-webkit-slider-thumb]:rounded-full [&::-webkit-slider-thumb]:border [&::-webkit-slider-thumb]:border-[#333] [&::-webkit-slider-thumb]:bg-[#eceef0]"
          />
        </div>
        <button type="button" aria-label="放大" className="ml-[12px]"><Stroke w={11} h={12} sw={2} d="M0 6h11M5.500 .5v11" /></button>
        <button type="button" aria-label="全屏" className="ml-3"><Stroke w={15} h={15} d="M1 5V1h4M10 1h4v4M14 10v4h-4M5 14H1v-4M1 1l4.500 4.500M14 1L9.500 5.500M14 14l-4.500-4.500M1 14l4.500-4.500" /></button>
      </div>
    </footer>
  );
}

function ImeBar() {
  return (
    <div className="absolute right-0 bottom-[87px] z-20 flex h-[27px] w-[138px] items-center rounded-xs border border-[#a9c6e6] bg-white pl-[20px] text-[#0672da]">
      <svg width="34" height="32" viewBox="0 0 34 32" className="absolute -top-[6px] -left-[18px]" aria-hidden="true">
        <defs>
          <linearGradient id="ime" x1="0" y1="0" x2="0" y2="1"><stop offset="0" stopColor="#ff7a3d" /><stop offset="1" stopColor="#e8430f" /></linearGradient>
        </defs>
        <rect x="3" y="3" width="27" height="26" rx="3" fill="url(#ime)" transform="rotate(-10 17 16)" />
        <path d="M27 8.500C20 5.500 9.500 7 9 11.500c-.5 4 15 2 15 6.500 0 5-11 6.500-18 3.500" fill="none" stroke="#fff" strokeWidth="4.500" />
      </svg>
      <div className="flex flex-1 items-center justify-between pr-[5px]">
        <span className="text-[15px] leading-none font-black">中</span>
        <svg width="12" height="11" viewBox="0 0 12 11" aria-hidden="true">
          <circle cx="3" cy="3" r="1.800" fill="none" stroke="currentColor" strokeWidth="1.500" />
          <path d="M8 5h3.500v3L9.500 11H8.500L9 8.500H8z" fill="currentColor" />
        </svg>
        <svg width="12" height="16" viewBox="0 0 12 16" aria-hidden="true">
          <rect x="3" y="0" width="6" height="10" rx="3" fill="currentColor" />
          <path d="M.8 6.500c0 7 10.400 7 10.400 0M6 12v2M4 15h4" fill="none" stroke="currentColor" strokeWidth="1.500" />
        </svg>
        <svg width="15" height="12" viewBox="0 0 15 12" fill="none" stroke="currentColor" aria-hidden="true">
          <rect x=".8" y=".8" width="13.400" height="10.400" rx="1" strokeWidth="1.600" />
          <path d="M3 4h9M3 6.500h9" strokeWidth="1.500" strokeDasharray="1.500 1" />
          <path d="M4.500 9h6" strokeWidth="1.300" />
        </svg>
        <svg width="13" height="13" viewBox="0 0 13 13" fill="currentColor" aria-hidden="true">
          <rect width="6" height="6" rx="1.500" />
          <rect x="7.800" y=".8" width="4.400" height="4.400" rx="1.500" fill="none" stroke="currentColor" strokeWidth="1.600" />
          <rect y="7" width="6" height="6" rx="1.500" />
          <rect x="7" y="7" width="6" height="6" rx="1.500" />
        </svg>
      </div>
    </div>
  );
}

function LevelMeter() {
  const colors = ["#343a4c", "#343a4c", "#343a4c", "#343a4c", "#343a4c", "#343a4c", "#e0a55c", "#e2b860", "#e2c663", "#dfd068", "#d2d66d", "#c0d774", "#abd57c", "#98d386", "#8ad292", "#7fd3a0", "#76d4ae", "#70d5bb", "#6ed6c6", "#6ed6cc", "#6ed6d0", "#6ed6d0", "#6ed6d0"];
  return (
    <div className="absolute right-0 bottom-[127px] z-20 flex h-[59px] w-[10px] flex-col items-end gap-px rounded-l-sm border border-r-0 border-[#343a4c] bg-[#5a6074] pt-[6px] pr-[2px]">
      {colors.map((c, i) => (
        <span key={i} className="h-px w-1 shrink-0" style={{ backgroundColor: c }} />
      ))}
    </div>
  );
}

function Watermark() {
  return (
    <div className="pointer-events-none absolute right-[8px] bottom-[6px] z-20 flex items-center opacity-80">
      <svg width="42" height="40" viewBox="0 0 42 40" aria-hidden="true">
        <defs>
          <linearGradient id="wm1" x1="0" y1="1" x2="1" y2="0"><stop offset="0" stopColor="#2c6cc4" /><stop offset="1" stopColor="#5bb8ee" /></linearGradient>
          <linearGradient id="wm2" x1="0" y1="1" x2="1" y2="0"><stop offset="0" stopColor="#d5dc4a" /><stop offset="0.500" stopColor="#54bf6e" /><stop offset="1" stopColor="#4fc07a" /></linearGradient>
        </defs>
        <path d="M36 1C18 1 2 10 1 23c0 6 3 9 8 11C4 25 8 10 36 1z" fill="url(#wm1)" />
        <path d="M30 5C19 9 11 15 11 20c0 5 8 4 9 7 1 2-2 4-8 5 8 1 13-2 13-6 0-6-9-4-10-7 0-4 6-9 15-14z" fill="#3f8ad2" />
        <path d="M20 16c10-4 21-2 21 6 0 9-13 17-27 17 9-2 20-8 20-15 0-6-7-8-14-8z" fill="url(#wm2)" />
      </svg>
      <div className="flex flex-col gap-[3px]">
        <span className="font-['Noto_Sans_CJK_SC',sans-serif] text-[21px] leading-[22px] font-bold text-[#5b93d6]">极光下载站</span>
        <span className="pl-[2px] font-['Liberation_Sans',sans-serif] text-[16px] leading-[18px] font-bold text-[#4fbb72]">www.xz7.com</span>
      </div>
    </div>
  );
}

export default function App() {
  return (
    <div className="relative flex h-screen flex-col overflow-hidden bg-[#f5f7fa] font-['Noto_Sans','Noto_Sans_CJK_SC',sans-serif] text-[12px] leading-4 text-[#262d40]">
      <TitleBar />
      <MenuBar />
      <Ribbon />
      <main className="flex min-h-0 flex-1">
        <div className="flex min-w-0 flex-1 flex-col">
          <FormulaBar />
          <div className="flex min-h-0 flex-1">
            <SheetGrid />
            <VScroll />
          </div>
          <SheetBar />
        </div>
        <SideBar />
      </main>
      <StatusBar />
      <LevelMeter />
      <ImeBar />
      <Watermark />
    </div>
  );
}
